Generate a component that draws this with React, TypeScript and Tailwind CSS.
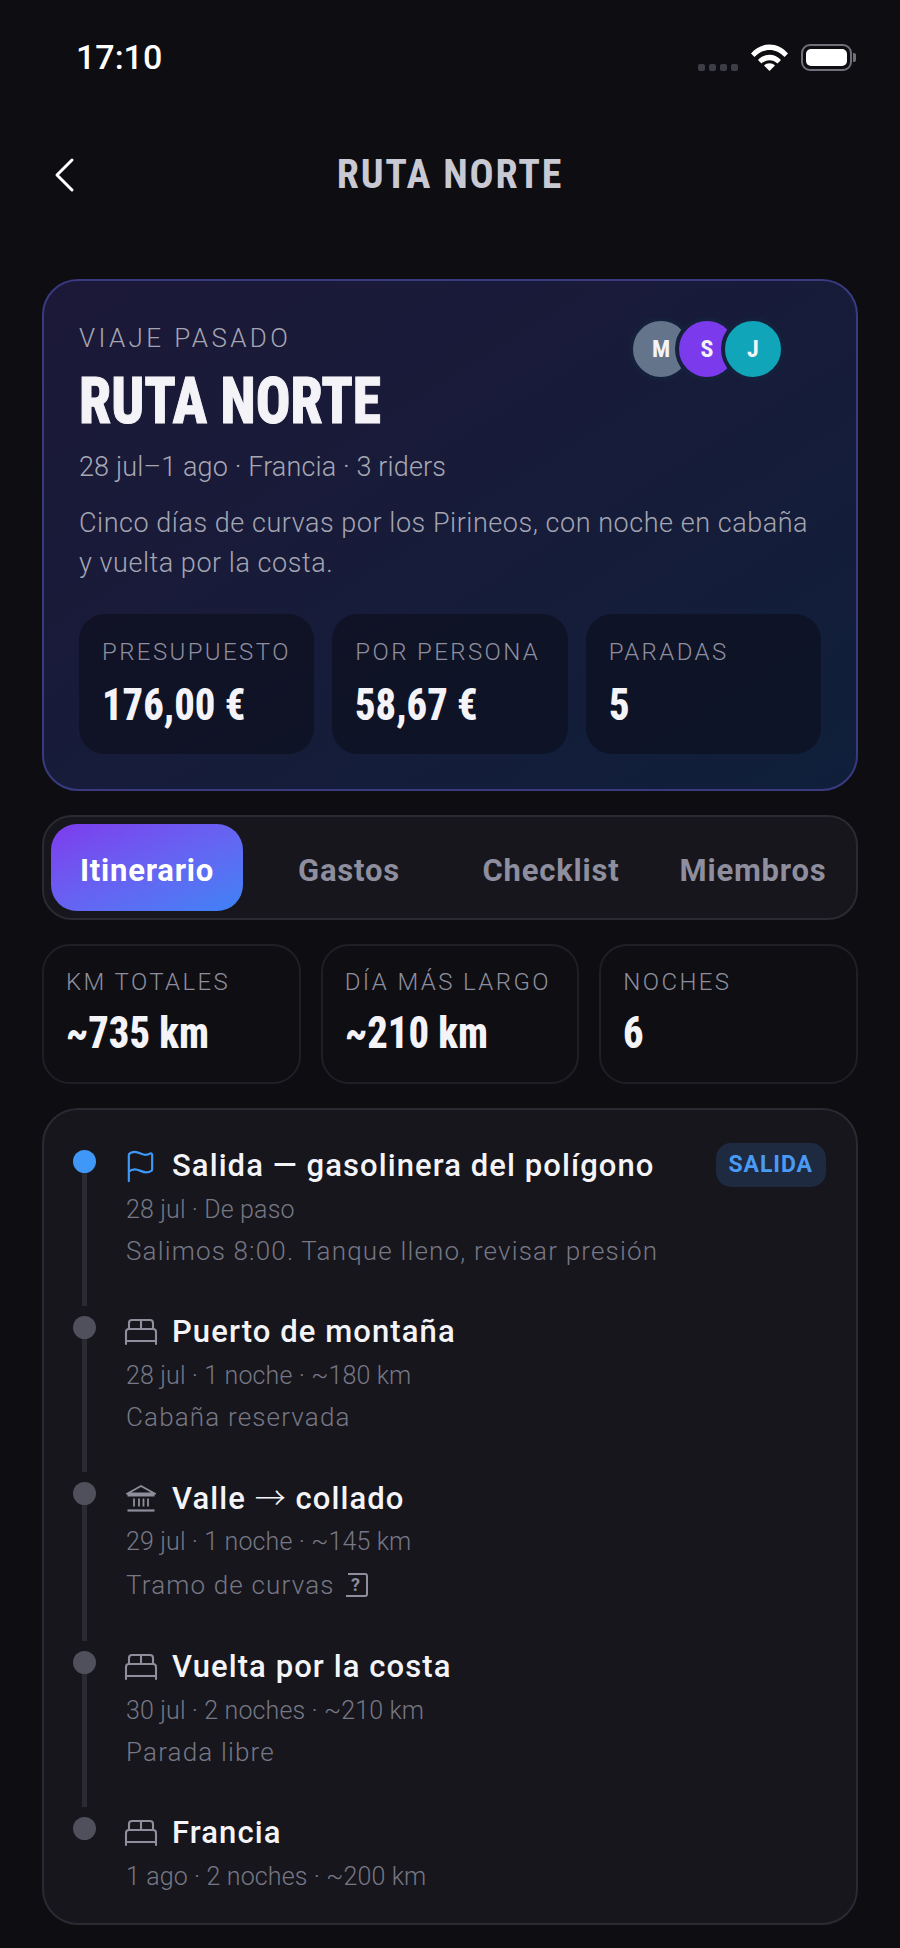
import { BedDouble, Flag } from "lucide-react";
import type { ReactNode } from "react";

const condensed = "font-['Liberation_Sans_Narrow','Roboto_Condensed','Roboto',sans-serif]";

const heroStats = [
  { label: "PRESUPUESTO", value: "176,00 €" },
  { label: "POR PERSONA", value: "58,67 €" },
  { label: "PARADAS", value: "5" },
];

const tripStats = [
  { label: "KM TOTALES", value: "~735 km" },
  { label: "DÍA MÁS LARGO", value: "~210 km" },
  { label: "NOCHES", value: "6" },
];

const LandmarkIcon = () => (
  <svg viewBox="0 0 30 30" className="size-[30px]" fill="none" stroke="#8e8e9c" strokeWidth="1.8">
    <path d="M1.500 10.500 15 3l13.500 7.500z M1.500 12.500h27" />
    <path d="M8 15.500v8 M13 15.500v8 M17.500 15.500v8 M22 15.500v8" />
    <path d="M1.500 27.500h27" strokeWidth="2.200" />
  </svg>
);

const QuestionBox = () => (
  <svg viewBox="0 0 24 26" className="my-[9.5px] ml-[10px] inline-block h-[26px] w-[24px] align-middle" fill="none" stroke="#8e8e9c" strokeWidth="2">
    <path d="M3 2h17a2 2 0 0 1 2 2v18a2 2 0 0 1-2 2H1" />
    <text x="11" y="19" textAnchor="middle" fontSize="18" fontWeight="700" fill="#8e8e9c" stroke="none" fontFamily="Roboto">?</text>
  </svg>
);

const bed = <BedDouble className="-ml-[3px] size-[36px] text-[#8e8e9c]" strokeWidth={1.4} />;

const stops: { icon: ReactNode; title: ReactNode; meta: string; note?: ReactNode; badge?: boolean; first?: boolean }[] = [
  {
    icon: <Flag className="-ml-[3px] size-[35px] text-[#3f97f7]" strokeWidth={1.5} />,
    title: "Salida — gasolinera del polígono",
    meta: "28 jul · De paso",
    note: "Salimos 8:00. Tanque lleno, revisar presión",
    badge: true,
    first: true,
  },
  {
    icon: bed,
    title: "Puerto de montaña",
    meta: "28 jul · 1 noche · ~180 km",
    note: "Cabaña reservada",
  },
  {
    icon: <LandmarkIcon />,
    title: (
      <>
        Valle <span className="font-['Noto_Sans_CJK_SC',sans-serif] font-light">→</span> collado
      </>
    ),
    meta: "29 jul · 1 noche · ~145 km",
    note: (
      <>
        Tramo de curvas
        <QuestionBox />
      </>
    ),
  },
  {
    icon: bed,
    title: "Vuelta por la costa",
    meta: "30 jul · 2 noches · ~210 km",
    note: "Parada libre",
  },
  {
    icon: bed,
    title: "Francia",
    meta: "1 ago · 2 noches · ~200 km",
  },
];

const StatusBar = () => (
  <div className="flex h-[114px] items-center justify-between pl-[76px] pr-[44px]">
    <span className="text-[34px] font-medium text-white">17:10</span>
    <div className="flex items-center">
      <div className="mt-[20px] flex gap-[4px]">
        {[0, 1, 2, 3].map((i) => (
          <span key={i} className="size-[7px] rounded-[2px] bg-[#3d3d47]" />
        ))}
      </div>
      <svg viewBox="0 0 37 28" className="ml-[13px] h-[28px] w-[37px]" fill="white">
        <path d="M0 10.500C10-1.500 27-1.500 37 10.500l-3.500 3.500C25 4.500 12 4.500 3.500 14z" />
        <path d="M7 17c6.500-7 16.500-7 23 0l-3.500 3.500c-4.500-4.500-11.500-4.500-16 0z" />
        <path d="M18.500 28l-5.500-5.500c3-3 8-3 11 0z" />
      </svg>
      <div className="ml-[13px] flex items-center">
        <div className="flex h-[27px] w-[51px] rounded-[9px] border-2 border-[#70707a] p-[3px]">
          <div className="flex-1 rounded-[5px] bg-white" />
        </div>
        <div className="ml-[1px] h-[9px] w-[3px] rounded-r-[2px] bg-[#70707a]" />
      </div>
    </div>
  </div>
);

export default function App() {
  return (
    <div className="h-[1948px] w-[900px] overflow-hidden bg-[#0d0d12] font-['Roboto',sans-serif]">
      <StatusBar />

      <div className="relative flex h-[122px] items-center justify-center">
        <svg viewBox="0 0 22 36" className="absolute left-[53px] h-[36px] w-[22px]" fill="none" stroke="white" strokeWidth="3" strokeLinecap="round" strokeLinejoin="round">
          <path d="M19 3 4 18l15 15" />
        </svg>
        <span className={`${condensed} text-[40px] font-bold tracking-[0.045em] text-[#c9c9d4]`}>RUTA NORTE</span>
      </div>

      <div className="mt-[43px] flex flex-col gap-6 px-[42px]">
        {/* tarjeta principal */}
        <section className="h-[512px] rounded-[36px] border-2 border-[#3a3a80] bg-linear-to-br from-[#1c1838] to-[#0f1f3a] px-[35px] pt-[36px]">
          <div className="flex justify-between pr-[36px]">
            <div>
              <p className="mt-[4px] text-[26px] font-light leading-[34px] tracking-[0.13em] text-[#a5a5b2]">VIAJE PASADO</p>
              <h1 className={`${condensed} mt-[11px] origin-left scale-x-[0.9] text-[64px] font-extrabold leading-[72px] text-[#f4f4f8] [-webkit-text-stroke:1px_#f4f4f8]`}>RUTA NORTE</h1>
            </div>
            <div className="flex h-[64px]">
              {[
                { l: "M", c: "bg-[#64748b]" },
                { l: "S", c: "bg-[#7c3aed]" },
                { l: "J", c: "bg-[#10a5b8]" },
              ].map((a, i) => (
                <div
                  key={a.l}
                  className={`${a.c} ${i > 0 ? "-ml-[18px]" : ""} ${condensed} flex size-[64px] items-center justify-center rounded-full border-4 border-[#15203c] text-[24px] font-bold text-[#f4f4f8]`}
                >
                  {a.l}
                </div>
              ))}
            </div>
          </div>
          <p className="mt-[9px] text-[27px] font-light leading-[40px] tracking-[0.005em] text-[#a8a8b4]">
            28 jul–1 ago · Francia · 3 riders
          </p>
          <p className="mt-[16px] whitespace-nowrap text-[27px] font-light leading-[40px] tracking-[0.02em] text-[#a5a5b2]">
            Cinco días de curvas por los Pirineos, con noche en cabaña
            <br />y vuelta por la costa.
          </p>
          <div className="mt-[31px] grid grid-cols-3 gap-[18px]">
            {heroStats.map((s) => (
              <div key={s.label} className="h-[140px] rounded-[26px] bg-[#0a0a14]/50 px-[23px] pt-[22px]">
                <p className="text-[24px] font-light leading-[32px] tracking-[0.1em] text-[#8e8e9e]">{s.label}</p>
                <p className={`${condensed} mt-[12px] origin-left scale-x-[0.9] text-[45px] font-extrabold leading-[50px] text-[#f4f4f8]`}>{s.value}</p>
              </div>
            ))}
          </div>
        </section>

        {/* pestañas */}
        <nav className="grid h-[105px] grid-cols-4 gap-2.5 rounded-[30px] border-2 border-[#2a2a32] bg-[#16161c] p-[7px]">
          {["Itinerario", "Gastos", "Checklist", "Miembros"].map((t, i) => (
            <div
              key={t}
              className={
                i === 0
                  ? "flex items-center justify-center rounded-[26px] bg-linear-to-br from-[#7c3aed] to-[#3b82f6] pt-[7px] text-[31px] font-bold tracking-[0.025em] text-white"
                  : "flex items-center justify-center rounded-[26px] pt-[7px] text-[31px] font-bold tracking-[0.025em] text-[#8e8e9e]"
              }
            >
              {t}
            </div>
          ))}
        </nav>

        {/* resumen */}
        <div className="grid grid-cols-3 gap-5">
          {tripStats.map((s) => (
            <div key={s.label} className="h-[140px] rounded-[28px] border-2 border-[#1f1f26] bg-[#0e0e13] px-[22px] pt-[20px]">
              <p className="text-[24px] font-light leading-[32px] tracking-[0.1em] text-[#8e8e9e]">{s.label}</p>
              <p className={`${condensed} mt-[10px] origin-left scale-x-[0.9] text-[45px] font-extrabold leading-[50px] text-[#f4f4f8]`}>{s.value}</p>
            </div>
          ))}
        </div>

        {/* itinerario */}
        <section className="rounded-[36px] border-2 border-[#2a2a32] bg-[#16161c] pb-[26px] pl-[29px] pr-[30px] pt-[34px]">
          {stops.map((s, i) => (
            <div key={i} className="flex">
              <div className="flex w-[23px] flex-col items-center">
                <span className={`${s.first ? "bg-[#3f97f7]" : "bg-[#50505c]"} mt-[6px] size-[23px] shrink-0 rounded-full`} />
                {i < stops.length - 1 && <span className="mb-[4px] w-[5px] flex-1 bg-[#2a2a32]" />}
              </div>
              <div className={`ml-[30px] min-w-0 flex-1 ${i < stops.length - 1 ? "pb-[38px]" : ""}`}>
                <div className="flex h-[44px] items-center">
                  <span className="flex w-[46px] shrink-0 items-center">{s.icon}</span>
                  <span className="text-[31px] font-medium tracking-[0.035em] text-[#f4f4f8]">{s.title}</span>
                  {s.badge && (
                    <span className="-mt-[2px] ml-auto rounded-[15px] bg-[#1e2a40] px-[13px] py-[7px] text-[23px] font-bold leading-[30px] tracking-[0.04em] text-[#4a9af5]">
                      SALIDA
                    </span>
                  )}
                </div>
                <p className="mt-[2px] text-[25px] font-light leading-[40px] tracking-[0.005em] text-[#777785]">{s.meta}</p>
                {s.note && (
                  <p className="flex items-center text-[26px] font-light leading-[42px] tracking-[0.045em] text-[#777785]">
                    <span className="inline-flex items-center">{s.note}</span>
                  </p>
                )}
              </div>
            </div>
          ))}
        </section>
      </div>
    </div>
  );
}
